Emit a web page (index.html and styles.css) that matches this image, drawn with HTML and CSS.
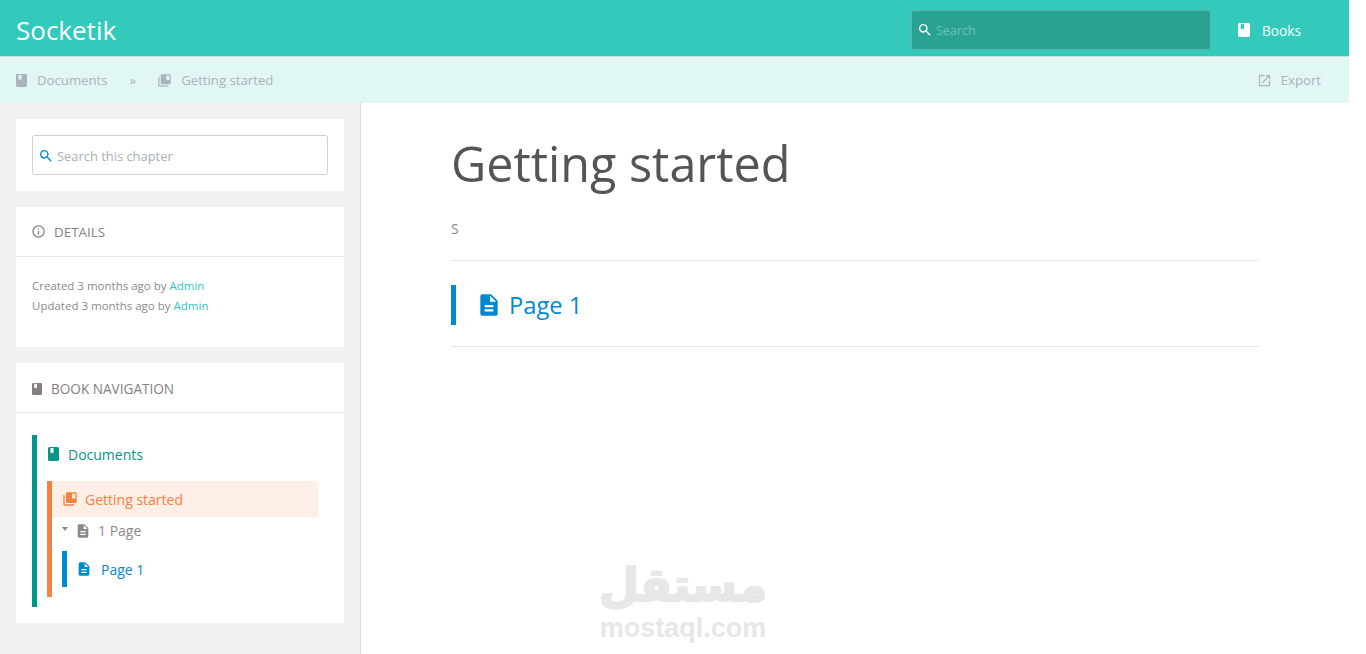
FILE: index.html
```html
<!DOCTYPE html>
<html lang="en">
  <head>
    <meta charset="UTF-8" />
    <meta name="viewport" content="width=device-width, initial-scale=1.0" />
    <title>Getting started | Socketik</title>
    <link rel="stylesheet" href="styles.css">
  </head>
  <body>
    <svg class="icon-defs" width="0" height="0" aria-hidden="true">
      <symbol id="i-book" viewBox="0 0 11 14" preserveAspectRatio="none"><path fill-rule="evenodd" d="M1.500 0h8A1.500 1.500 0 0 1 11 1.500v11A1.500 1.500 0 0 1 9.500 14h-8A1.500 1.500 0 0 1 0 12.500v-11A1.500 1.500 0 0 1 1.500 0zM2.500 1v5.500L4 5.600l1.500.9V1z"/></symbol>
      <symbol id="i-books" viewBox="0 0 24 24"><path fill-rule="evenodd" d="M4 6H2v14a2 2 0 0 0 2 2h14v-2H4zM20 2H8a2 2 0 0 0-2 2v12a2 2 0 0 0 2 2h12a2 2 0 0 0 2-2V4a2 2 0 0 0-2-2zm0 10-2.500-1.500L15 12V4h5z"/></symbol>
      <symbol id="i-file" viewBox="0 0 24 24"><path fill-rule="evenodd" d="M14 2H6a2 2 0 0 0-2 2v16a2 2 0 0 0 2 2h12a2 2 0 0 0 2-2V8zm2 16H8v-2h8zm0-4H8v-2h8zm-3-5V3.500L18.500 9z"/></symbol>
      <symbol id="i-search" viewBox="0 0 24 24"><path d="M15.500 14h-.79l-.28-.27A6.470 6.470 0 0 0 16 9.500 6.500 6.500 0 1 0 9.500 16c1.610 0 3.090-.59 4.230-1.570l.27.28v.79l5 4.990L20.490 19zm-6 0C7.010 14 5 11.990 5 9.500S7.010 5 9.500 5 14 7.010 14 9.500 11.990 14 9.500 14z"/></symbol>
      <symbol id="i-info" viewBox="0 0 24 24"><path fill-rule="evenodd" d="M12 2a10 10 0 1 0 0 20 10 10 0 0 0 0-20zm0 18a8 8 0 1 1 0-16 8 8 0 0 1 0 16zm-1-11h2V7h-2zm0 8h2v-6h-2z"/></symbol>
      <symbol id="i-export" viewBox="0 0 24 24"><path d="M19 19H5V5h7V3H5a2 2 0 0 0-2 2v14a2 2 0 0 0 2 2h14a2 2 0 0 0 2-2v-7h-2zM14 3v2h3.590l-9.830 9.830 1.410 1.410L19 6.410V10h2V3z"/></symbol>
    </svg>

    <!-- TOP BAR -->
    <header class="topbar">
      <a class="logo">Socketik</a>
      <div class="topbar-right">
        <div class="global-search">
          <svg class="icon"><use href="#i-search"/></svg>
          <span>Search</span>
        </div>
        <a class="books-link"><svg class="icon"><use href="#i-book"/></svg>Books</a>
      </div>
    </header>

    <!-- BREADCRUMBS -->
    <div class="crumbs">
      <a class="crumb"><svg class="icon icon-book"><use href="#i-book"/></svg>Documents</a>
      <span class="crumb-sep">»</span>
      <a class="crumb"><svg class="icon"><use href="#i-books"/></svg>Getting started</a>
      <a class="crumb crumb-export"><svg class="icon"><use href="#i-export"/></svg>Export</a>
    </div>

    <div class="columns">
      <!-- SIDEBAR -->
      <aside class="sidebar">
        <div class="card card-search">
          <div class="chapter-search">
            <svg class="icon"><use href="#i-search"/></svg>
            <span>Search this chapter</span>
          </div>
        </div>

        <div class="card">
          <h5 class="card-title title-details"><svg class="icon"><use href="#i-info"/></svg>DETAILS</h5>
          <div class="details">
            <p>Created 3 months ago by <a>Admin</a></p>
            <p>Updated 3 months ago by <a>Admin</a></p>
          </div>
        </div>

        <div class="card">
          <h5 class="card-title title-nav"><svg class="icon"><use href="#i-book"/></svg>BOOK NAVIGATION</h5>
          <div class="book-nav">
            <div class="nav-book">
              <a class="nav-item nav-documents"><svg class="icon"><use href="#i-book"/></svg>Documents</a>
              <div class="nav-chapter">
                <a class="nav-item nav-current"><svg class="icon"><use href="#i-books"/></svg>Getting started</a>
                <div class="nav-toggle"><span class="caret"></span><svg class="icon"><use href="#i-file"/></svg>1 Page</div>
                <a class="nav-item nav-page"><svg class="icon"><use href="#i-file"/></svg>Page 1</a>
              </div>
            </div>
          </div>
        </div>
      </aside>

      <!-- CONTENT -->
      <main class="content">
        <h1>Getting started</h1>
        <p class="chapter-desc">S</p>
        <a class="page-row"><svg class="icon"><use href="#i-file"/></svg>Page 1</a>
      </main>
    </div>

    <!-- watermark sits over the page -->
    <div class="watermark">
      <span class="wm-ar" lang="ar" dir="rtl">مستقل</span>
      <span class="wm-en">mostaql.com</span>
    </div>
  </body>
</html>
```

FILE: styles.css
```css
* {
  box-sizing: border-box;
  margin: 0;
  padding: 0;
}

html,
body {
  height: 100%;
  overflow: hidden;
}

body {
  width: 1349px;
  background-color: #fff;
  font-family: "Open Sans", "Noto Sans", sans-serif;
  font-size: 14px;
  color: #666;
  display: flex;
  flex-direction: column;
}

.icon-defs {
  position: absolute;
}

.icon {
  width: 16px;
  height: 16px;
  fill: currentColor;
  flex: none;
}

/* top bar */
.topbar {
  height: 57px;
  flex: none;
  display: flex;
  align-items: center;
  justify-content: space-between;
  padding: 4px 0 0 16px;
  background-color: #33cabb;
  border-bottom: 1px solid #cfe0de;
  color: #fff;
}

.logo {
  font-size: 26px;
}

.topbar-right {
  display: flex;
  align-items: center;
}

.global-search {
  width: 300px;
  height: 40px;
  margin-right: 27px;
  padding-left: 5px;
  display: flex;
  align-items: center;
  gap: 3px;
  background-color: #29a193;
  border: 1px solid #5cb8ad;
  border-radius: 3px;
  color: #fff;
  font-size: 12.5px;
}

.global-search span {
  color: #6fc2b8;
}

.books-link {
  width: 111px;
  display: flex;
  align-items: center;
  gap: 12px;
  font-size: 13.7px;
}

.books-link .icon {
  width: 12px;
  height: 14px;
}

/* breadcrumbs */
.crumbs {
  height: 46px;
  flex: none;
  display: flex;
  align-items: center;
  padding: 0 28px 0 14px;
  background-color: #e0f7f5;
  color: #a9b4bb;
  font-size: 13.2px;
}

.crumb {
  display: flex;
  align-items: center;
  gap: 9px;
}

.crumb .icon {
  width: 15px;
  height: 15px;
}

.crumb .icon-book {
  width: 11px;
  height: 13px;
  margin-left: 2px;
  margin-right: 1px;
}

.crumb-sep {
  margin: 0 21px 0 22px;
}

.crumb-export {
  margin-left: auto;
}

/* sidebar */
.columns {
  flex: 1;
  display: flex;
  min-height: 0;
}

.sidebar {
  width: 361px;
  flex: none;
  padding: 16px 16px 0;
  background-color: #f1f1f1;
  border-right: 1px solid #dcdcdc;
  display: flex;
  flex-direction: column;
  gap: 16px;
}

.card {
  background-color: #fff;
}

.card-search {
  padding: 16px;
}

.chapter-search {
  height: 40px;
  padding: 1px 0 0 5px;
  display: flex;
  align-items: center;
  gap: 3px;
  border: 1px solid #d0d0cc;
  border-radius: 3px;
  font-size: 12.9px;
  color: #a9b0b5;
}

.chapter-search .icon {
  color: #0288d1;
}

.card-title {
  height: 50px;
  display: flex;
  align-items: center;
  padding-left: 16px;
  border-bottom: 1px solid #e8e8e8;
  font-size: 13.4px;
  font-weight: 400;
  color: #857f7f;
}

.title-details .icon {
  width: 15px;
  height: 15px;
  margin: 0 8px 0 -1px;
}

.title-nav {
  padding-top: 2px;
  font-size: 13.6px;
}

.title-nav .icon {
  width: 10px;
  height: 12px;
  margin-right: 9px;
}

.details {
  height: 90px;
  padding: 19px 16px 0;
  font-size: 11.5px;
  line-height: 20px;
  color: #8a8a8a;
}

.details a {
  color: #33c4c4;
}

.book-nav {
  padding: 22px 16px 16px;
}

.nav-book {
  height: 172px;
  border-left: 5px solid #009688;
  padding: 0 10px;
}

.nav-item {
  display: flex;
  align-items: center;
}

.nav-documents {
  height: 46px;
  gap: 9px;
  padding: 0 0 8px 1px;
  color: #009688;
}

.nav-documents .icon {
  width: 11px;
  height: 14px;
}

.nav-chapter {
  height: 116px;
  border-left: 5px solid #f4813f;
}

.nav-current {
  height: 36px;
  gap: 7px;
  padding-left: 10px;
  background-color: #fdeee6;
  color: #f4813f;
}

.nav-toggle {
  height: 28px;
  display: flex;
  align-items: center;
  padding: 0 0 1px 10px;
  color: #8a8a8a;
}

.nav-toggle .icon {
  margin-right: 7px;
}

.caret {
  width: 0;
  height: 0;
  margin: 0 7px 3px 0;
  border: 3.5px solid transparent;
  border-top: 4px solid #8a8a8a;
  border-bottom: 0;
}

.nav-page {
  height: 36px;
  margin: 6px 0 0 10px;
  padding-left: 9px;
  gap: 9px;
  border-left: 5px solid #0288d1;
  color: #0288d1;
}

/* main content */
.content {
  flex: 1;
  padding: 24px 90px 0;
}

.content h1 {
  font-size: 48.5px;
  font-weight: 400;
  line-height: 72px;
  color: #555;
}

.chapter-desc {
  height: 62px;
  padding-top: 20px;
  line-height: 20px;
  border-bottom: 1px solid #e8e8e8;
  color: #888;
}

.page-row {
  height: 40px;
  margin-top: 24px;
  padding-left: 20px;
  display: flex;
  align-items: center;
  gap: 7px;
  border-left: 5px solid #0288d1;
  font-size: 23.7px;
  color: #0288d1;
  position: relative;
}

.page-row .icon {
  width: 26px;
  height: 26px;
}

.page-row::after {
  content: "";
  position: absolute;
  left: -5px;
  right: 0;
  top: 61px;
  border-bottom: 1px solid #e8e8e8;
}

/* watermark */
.watermark {
  position: absolute;
  left: 600px;
  top: 556px;
  width: 166px;
  display: flex;
  flex-direction: column;
  align-items: center;
  color: #e7e7e7;
  font-weight: 700;
}

.wm-ar {
  font-family: "DejaVu Sans", sans-serif;
  font-size: 46px;
  line-height: 58px;
  -webkit-text-stroke: 2px #e7e7e7;
}

.wm-en {
  font-family: "Liberation Sans", sans-serif;
  font-size: 27px;
  line-height: 28px;
}
```
